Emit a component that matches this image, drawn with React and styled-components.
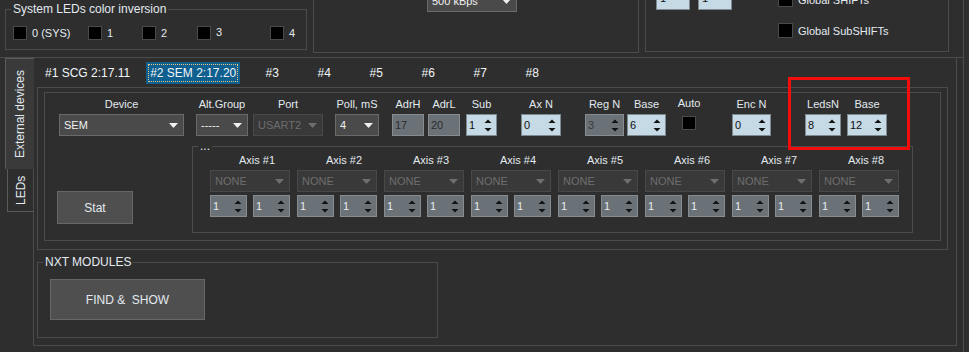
import React from 'react';
import styled, { createGlobalStyle } from 'styled-components';

const BG = '#2e2e2e';
const LINE = '#4b4b4b';
const TEXT = '#e3eaf0';

const GlobalStyle = createGlobalStyle`
  *, *::before, *::after { box-sizing: border-box; }
  html, body { margin: 0; padding: 0; background: ${BG}; overflow: hidden; }
  body { font-family: "Liberation Sans", Arial, sans-serif; color: ${TEXT}; }
`;

const Page = styled.div`
  width: 969px;
  height: 352px;
  display: flex;
  overflow: hidden;
  background: ${BG};
`;

const Content = styled.div`
  width: 963px;
  flex: none;
  display: flex;
  flex-direction: column;
`;

const Rail = styled.div`
  flex: 1;
  border-left: 1px solid ${LINE};
`;

/* ---------- top strip ---------- */
const TopRow = styled.div`
  height: 58px;
  flex: none;
  display: flex;
  align-items: flex-end;
  overflow: hidden;
  border-bottom: 1px solid ${LINE};
`;

const Group = styled.div`
  position: relative;
  flex: none;
  border: 1px solid ${LINE};
`;

const Legend = styled.span`
  position: absolute;
  top: -8px;
  left: ${p => p.$left}px;
  padding: 0 2px;
  background: ${BG};
  font-size: 12px;
  line-height: 14px;
  white-space: nowrap;
  color: ${TEXT};
`;

const SysGroup = styled(Group)`
  margin-left: 5px;
  margin-bottom: 7px;
  width: 302px;
  height: 41px;
  padding: 16px 0 0 7px;
`;

const CheckRow = styled.div`
  display: flex;
  align-items: center;
`;

const CheckItem = styled.div`
  width: ${p => p.$w}px;
  flex: none;
  display: flex;
  align-items: center;
`;

const Box = styled.div`
  width: ${p => p.$s || 14}px;
  height: ${p => p.$s || 14}px;
  flex: none;
  background: #000;
  border: 1px solid #4a4a4a;
`;

const CheckText = styled.span`
  margin-left: 5px;
  font-size: 11px;
  line-height: 14px;
  white-space: nowrap;
  position: relative;
  top: ${p => p.$dy || 0}px;
`;

const MidPanel = styled(Group)`
  margin-left: 6px;
  margin-bottom: 4px;
  width: 326px;
  height: 80px;
  padding: 16px 0 0 113px;
`;

const RightPanel = styled(Group)`
  margin-left: 6px;
  margin-bottom: 5px;
  width: 304px;
  height: 90px;
  padding-left: 10px;
  display: flex;
  align-items: flex-start;
`;

const InputsCol = styled.div`
  margin-top: 24px;
  display: flex;
  gap: 8px;
`;

const LightBox = styled.div`
  width: 34px;
  height: 23px;
  background: #c6dae6;
  border: 1px solid #7e8a92;
  color: #111;
  font-size: 11px;
  line-height: 21px;
  padding-left: 3px;
`;

const ChecksCol = styled.div`
  margin-left: 46px;
  margin-top: 29px;
  display: flex;
  flex-direction: column;
  gap: 16px;
`;

const CheckLine = styled.div`
  display: flex;
  align-items: center;
  height: 15px;
`;

/* ---------- main ---------- */
const MainRow = styled.div`
  height: 288px;
  flex: none;
  display: flex;
`;

const SideTabs = styled.div`
  width: 34px;
  flex: none;
  padding-left: 5px;
  display: flex;
  flex-direction: column;
`;

const SideTab = styled.div`
  flex: none;
  display: flex;
  align-items: center;
  justify-content: center;
  writing-mode: vertical-rl;
  transform: rotate(180deg);
  font-size: 12px;
  color: ${TEXT};
  border-bottom: 1px solid #5a5a5a;
  ${p => p.$active
    ? `width: 29px; height: 111px; background: #3a3a3a; border-right: 1px solid #5a5a5a;`
    : `width: 27px; height: 43px; margin-left: 2px; border-left: 1px solid ${LINE}; border-right: 1px solid #5a5a5a; border-bottom: none; border-top: 1px solid #5a5a5a;`}
`;

const SideFill = styled.div`
  flex: 1;
  border-right: 1px solid ${LINE};
`;

const Panel = styled.div`
  width: 923px;
  flex: none;
  border-right: 1px solid ${LINE};
  border-bottom: 1px solid ${LINE};
  display: flex;
  flex-direction: column;
`;

const TabBar = styled.div`
  display: flex;
  gap: 12px;
  padding: 4px 0 0 7px;
  height: 26px;
`;

const TabHead = styled.div`
  height: 22px;
  min-width: 40px;
  padding: 0 4px;
  display: flex;
  align-items: center;
  justify-content: center;
  font-size: 12px;
  white-space: nowrap;
  color: #f2f5f8;
  position: relative;
  background: ${p => (p.$active ? '#0f5f8f' : 'transparent')};
  ${p => p.$active && `
    &::after {
      content: '';
      position: absolute;
      inset: 2px;
      border: 1px dotted #e9c48a;
    }
  `}
`;

const TabPage = styled.div`
  margin: 3px 0 0 3px;
  width: 911px;
  height: 163px;
  border: 1px solid ${LINE};
  padding: 4px 0 0 6px;
`;

const InnerBox = styled.div`
  position: relative;
  width: 897px;
  height: 149px;
  border: 1px solid ${LINE};
  padding: 4px 0 0 0;
`;

const FieldRow = styled.div`
  display: flex;
  align-items: flex-start;
`;

const Field = styled.div`
  flex: none;
  width: ${p => p.$w}px;
  margin-left: ${p => p.$ml}px;
  display: flex;
  flex-direction: column;
  align-items: center;
`;

const FieldLabel = styled.div`
  height: 14px;
  line-height: 14px;
  font-size: 11px;
  white-space: nowrap;
  margin-bottom: 3px;
  position: relative;
  top: ${p => p.$dy || 0}px;
`;

const Select = styled.div`
  width: ${p => (p.$w ? `${p.$w}px` : '100%')};
  height: 22px;
  flex: none;
  display: flex;
  align-items: center;
  justify-content: space-between;
  padding: 0 5px 0 4px;
  font-size: 11px;
  white-space: nowrap;
  background: ${p => (p.$disabled ? '#393939' : '#4a4a4a')};
  border: 1px solid ${p => (p.$disabled ? '#484848' : '#6a6a6a')};
  color: ${p => (p.$disabled ? '#6e6e6e' : '#f0f0f0')};
`;

const SpinBox = styled.div`
  width: ${p => (p.$w ? `${p.$w}px` : '100%')};
  height: 22px;
  flex: none;
  display: flex;
  align-items: center;
  justify-content: space-between;
  padding: 0 4px 0 2px;
  font-size: 11px;
  background: ${p => (p.$muted ? '#6a7278' : '#c6dae6')};
  border: 1px solid ${p => (p.$muted ? '#868c90' : '#7e8a92')};
  color: ${p => p.$fg || '#101010'};
`;

const AutoBox = styled(Box)`
  margin-top: 2px;
`;

const LowerRow = styled.div`
  display: flex;
  align-items: flex-start;
`;

const Button = styled.div`
  flex: none;
  width: ${p => p.$w}px;
  height: ${p => p.$h}px;
  margin: ${p => p.$m};
  display: flex;
  align-items: center;
  justify-content: center;
  background: #4f4f4f;
  border: 1px solid #676767;
  font-size: 12px;
  white-space: pre;
  color: ${TEXT};
`;

const AxisGroup = styled(Group)`
  margin: 10px 0 0 59px;
  width: 721px;
  height: 87px;
  padding: 6px 0 0 17px;
  display: flex;
  gap: 7px;
`;

const AxisCol = styled.div`
  width: 80px;
  flex: none;
  display: flex;
  flex-direction: column;
  gap: 3px;
`;

const AxisLabel = styled.div`
  height: 14px;
  line-height: 14px;
  font-size: 11px;
  text-align: center;
  padding-left: 14px;
  white-space: nowrap;
`;

const SpinPair = styled.div`
  display: flex;
  gap: 6px;
`;

const Highlight = styled.div`
  position: absolute;
  left: 743px;
  top: -16px;
  width: 122px;
  height: 73px;
  border: 3px solid #f20c0c;
  pointer-events: none;
`;

const NxtGroup = styled(Group)`
  margin: 12px 0 0 3px;
  width: 401px;
  height: 76px;
  padding: 16px 0 0 12px;
`;

/* ---------- icons ---------- */
const DropArrow = ({ color = '#f0f0f0' }) => (
  <svg width="9" height="5" viewBox="0 0 9 5" style={{ flex: 'none' }}>
    <path d="M0 0 H9 L4.5 5 Z" fill={color} />
  </svg>
);

const SpinArrows = () => (
  <svg width="8" height="13" viewBox="0 0 8 13" style={{ flex: 'none' }}>
    <path d="M0.5 4 L4 0.5 L7.5 4 Z" fill="#111" />
    <path d="M0.5 9 L7.5 9 L4 12.5 Z" fill="#111" />
  </svg>
);

const Drop = ({ children, disabled, w }) => (
  <Select $disabled={disabled} $w={w}>
    <span>{children}</span>
    <DropArrow color={disabled ? '#6e6e6e' : '#f0f0f0'} />
  </Select>
);

const Spin = ({ children, muted, fg, w }) => (
  <SpinBox $muted={muted} $fg={fg} $w={w}>
    <span>{children}</span>
    <SpinArrows />
  </SpinBox>
);

const sysItems = [
  { label: '0 (SYS)', w: 75 },
  { label: '1', w: 54 },
  { label: '2', w: 55 },
  { label: '3', w: 73, dy: -1 },
  { label: '4', w: 30 },
];

const tabs = ['#1 SCG 2:17.11', '#2 SEM 2:17.20', '#3', '#4', '#5', '#6', '#7', '#8'];

export default function App() {
  return (
    <>
      <GlobalStyle />
      <Page>
        <Content>
          <TopRow>
            <SysGroup>
              <Legend $left={5}>System LEDs color inversion</Legend>
              <CheckRow>
                {sysItems.map(it => (
                  <CheckItem key={it.label} $w={it.w}>
                    <Box />
                    <CheckText $dy={it.dy}>{it.label}</CheckText>
                  </CheckItem>
                ))}
              </CheckRow>
            </SysGroup>
            <MidPanel>
              <Drop w={90}>500 kBps</Drop>
            </MidPanel>
            <RightPanel>
              <InputsCol>
                <LightBox>1</LightBox>
                <LightBox>1</LightBox>
              </InputsCol>
              <ChecksCol>
                <CheckLine>
                  <Box $s={15} />
                  <CheckText>Global SHIFTs</CheckText>
                </CheckLine>
                <CheckLine>
                  <Box $s={15} />
                  <CheckText>Global SubSHIFTs</CheckText>
                </CheckLine>
              </ChecksCol>
            </RightPanel>
          </TopRow>

          <MainRow>
            <SideTabs>
              <SideTab $active>External devices</SideTab>
              <SideTab>LEDs</SideTab>
              <SideFill />
            </SideTabs>

            <Panel>
              <TabBar>
                {tabs.map((t, i) => (
                  <TabHead key={t} $active={i === 1}>{t}</TabHead>
                ))}
              </TabBar>

              <TabPage>
                <InnerBox>
                  <FieldRow>
                    <Field $w={125} $ml={14}>
                      <FieldLabel>Device</FieldLabel>
                      <Drop>SEM</Drop>
                    </Field>
                    <Field $w={52} $ml={12}>
                      <FieldLabel>Alt.Group</FieldLabel>
                      <Drop>-----</Drop>
                    </Field>
                    <Field $w={70} $ml={5}>
                      <FieldLabel>Port</FieldLabel>
                      <Drop disabled>USART2</Drop>
                    </Field>
                    <Field $w={44} $ml={12}>
                      <FieldLabel>Poll, mS</FieldLabel>
                      <Drop>4</Drop>
                    </Field>
                    <Field $w={32} $ml={13}>
                      <FieldLabel>AdrH</FieldLabel>
                      <SpinBox $muted $fg="#2c2c2c"><span>17</span></SpinBox>
                    </Field>
                    <Field $w={32} $ml={4}>
                      <FieldLabel>AdrL</FieldLabel>
                      <SpinBox $muted $fg="#2c2c2c"><span>20</span></SpinBox>
                    </Field>
                    <Field $w={31} $ml={6}>
                      <FieldLabel>Sub</FieldLabel>
                      <Spin>1</Spin>
                    </Field>
                    <Field $w={40} $ml={24}>
                      <FieldLabel>Ax N</FieldLabel>
                      <Spin>0</Spin>
                    </Field>
                    <Field $w={39} $ml={24}>
                      <FieldLabel>Reg N</FieldLabel>
                      <Spin muted fg="#3a3a3a">3</Spin>
                    </Field>
                    <Field $w={39} $ml={3}>
                      <FieldLabel>Base</FieldLabel>
                      <Spin>6</Spin>
                    </Field>
                    <Field $w={14} $ml={16}>
                      <FieldLabel $dy={-1}>Auto</FieldLabel>
                      <AutoBox />
                    </Field>
                    <Field $w={39} $ml={36}>
                      <FieldLabel>Enc N</FieldLabel>
                      <Spin>0</Spin>
                    </Field>
                    <Field $w={36} $ml={34}>
                      <FieldLabel>LedsN</FieldLabel>
                      <Spin>8</Spin>
                    </Field>
                    <Field $w={40} $ml={6}>
                      <FieldLabel>Base</FieldLabel>
                      <Spin>12</Spin>
                    </Field>
                  </FieldRow>

                  <LowerRow>
                    <Button $w={76} $h={33} $m="55px 0 0 12px">Stat</Button>
                    <AxisGroup>
                      <Legend $left={5}>...</Legend>
                      {[1, 2, 3, 4, 5, 6, 7, 8].map(n => (
                        <AxisCol key={n}>
                          <AxisLabel>Axis #{n}</AxisLabel>
                          <Drop disabled>NONE</Drop>
                          <SpinPair>
                            <Spin muted fg="#e8ecef" w={37}>1</Spin>
                            <Spin muted fg="#e8ecef" w={37}>1</Spin>
                          </SpinPair>
                        </AxisCol>
                      ))}
                    </AxisGroup>
                  </LowerRow>

                  <Highlight />
                </InnerBox>
              </TabPage>

              <NxtGroup>
                <Legend $left={5}>NXT MODULES</Legend>
                <Button $w={155} $h={41} $m="0">{'FIND &  SHOW'}</Button>
              </NxtGroup>
            </Panel>
          </MainRow>
        </Content>
        <Rail />
      </Page>
    </>
  );
}
